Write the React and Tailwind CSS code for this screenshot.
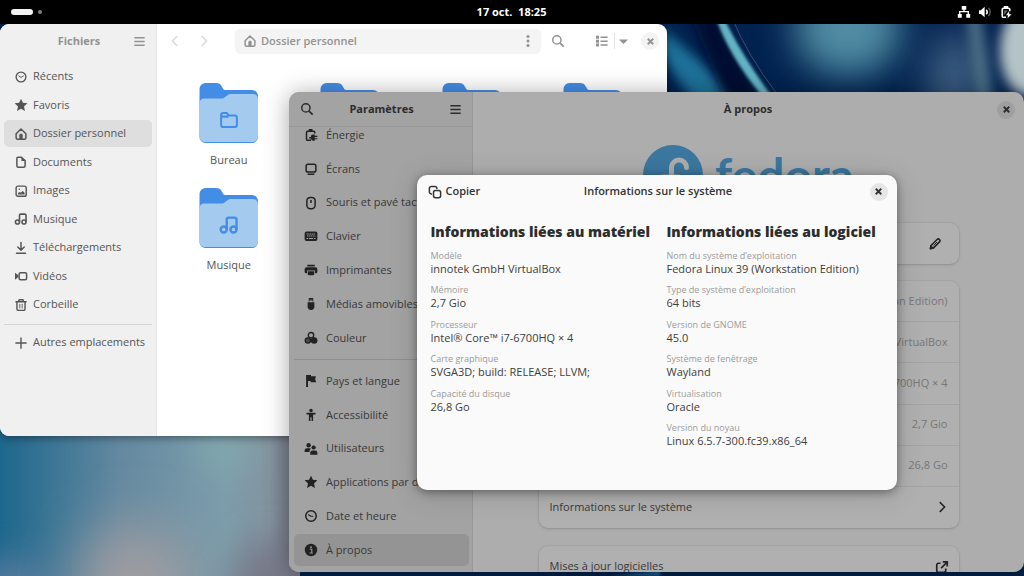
const icons = {
  recent: (
    <g fill="none" stroke="currentColor">
      <circle cx="8" cy="8" r="6.5" strokeWidth="1.8" />
      <path d="M4.6 6.2 8 8.6l3.6-2.2" strokeWidth="1.3" />
    </g>
  ),
  clock: (
    <g fill="none" stroke="currentColor">
      <circle cx="8" cy="8" r="7" strokeWidth="2" />
      <path d="M4.4 6 7.6 8.4H11" strokeWidth="1.5" />
    </g>
  ),
  star: <path d="M8-.4 10.5 5.100l6 .7-4.500 4.100 1.300 6L8 12.900 2.700 15.900l1.300-6L-.5 5.800l6-.7z" fill="currentColor" />,
  home: (
    <g>
      <path
        d="M1.500 7.600 8 1.300l6.500 6.300v5.400a2 2 0 0 1-2 2h-9a2 2 0 0 1-2-2z"
        fill="none"
        stroke="currentColor"
        strokeWidth="2"
        strokeLinejoin="round"
      />
      <path d="M5.800 15V9.500C5.800 8.500 6.800 7.800 8 7.800s2.200.7 2.200 1.700V15z" fill="currentColor" />
    </g>
  ),
  document: (
    <g>
      <path
        d="M4 1.500h4.500L13.500 6v7a2 2 0 0 1-2 2h-7a2 2 0 0 1-2-2V3A1.500 1.500 0 0 1 4 1.500z"
        fill="none"
        stroke="currentColor"
        strokeWidth="2"
      />
      <path d="M8.500 2v4.500h5z" fill="currentColor" />
    </g>
  ),
  image: (
    <g>
      <rect x="1.500" y="1.500" width="13.500" height="13.500" rx="2.500" fill="none" stroke="currentColor" strokeWidth="1.900" />
      <path d="M4 12.800v-2l2-1.600 1.500 1.100L10.200 8l2.600 2.300v2.500z" fill="currentColor" />
      <circle cx="5.800" cy="5.800" r="1" fill="currentColor" />
    </g>
  ),
  music: (
    <g fill="none" stroke="currentColor" strokeWidth="2.100">
      <circle cx="3.300" cy="12" r="2.700" />
      <circle cx="12" cy="12" r="2.700" />
      <path d="M6 12V9.500M6 12V3a1.500 1.500 0 0 1 1.500-1.500h5.700A1.500 1.500 0 0 1 14.700 3v9" />
    </g>
  ),
  download: (
    <g fill="none" stroke="currentColor" strokeWidth="2" strokeLinecap="round">
      <path d="M8 .5v10M3.700 6.600 8 10.900l4.300-4.300M2 15h12" />
    </g>
  ),
  video: (
    <g>
      <rect x="5.500" y="3.500" width="10" height="9.500" rx="2" fill="none" stroke="currentColor" strokeWidth="2" />
      <path d="M0 3.500 4.500 7v2.400L0 12.900z" fill="currentColor" />
    </g>
  ),
  trash: (
    <g fill="none" stroke="currentColor" strokeWidth="1.900">
      <path d="M.5 3.600h15M5 3.500V2A1 1 0 0 1 6 1h4a1 1 0 0 1 1 1v1.500M2.600 4v9.200a2 2 0 0 0 2 2h6.800a2 2 0 0 0 2-2V4" />
      <path d="M6.400 6.500v6M9.600 6.500v6" strokeWidth="1.200" />
    </g>
  ),
  plus: <path d="M8 .5v15M.5 8h15" stroke="currentColor" strokeWidth="1.900" />,
  menu: <path d="M.5 2.500h15M.5 8h15M.5 13.500h15" stroke="currentColor" strokeWidth="2" />,
  search: (
    <g fill="none" stroke="currentColor" strokeWidth="2">
      <circle cx="6.500" cy="6.500" r="5.500" />
      <path d="m10.400 10.400 5.200 5.200" strokeWidth="2.300" />
    </g>
  ),
  back: <path d="M11 1.500 4.500 8l6.500 6.500" fill="none" stroke="currentColor" strokeWidth="2" />,
  next: <path d="M5 1.500 11.500 8 5 14.500" fill="none" stroke="currentColor" strokeWidth="2" />,
  more: (
    <g fill="currentColor">
      <circle cx="8" cy="2" r="2" />
      <circle cx="8" cy="8" r="2" />
      <circle cx="8" cy="14" r="2" />
    </g>
  ),
  list: <path d="M0 1h4v4H0zM0 6.200h4v4H0zM0 11.400h4v4H0zM6 2h9.500v2H6zM6 7.200h9.500v2H6zM6 12.400h9.500v2H6z" fill="currentColor" />,
  caret: <path d="M1.500 5h13L8 11.800z" fill="currentColor" />,
  close: <path d="m4 4 8 8M12 4l-8 8" stroke="currentColor" strokeWidth="2.600" />,
  copy: (
    <g fill="none" stroke="currentColor" strokeWidth="2">
      <path d="M4 10.500H3a2.500 2.500 0 0 1-2.500-2.500V3A2.500 2.500 0 0 1 3 .5h5A2.500 2.500 0 0 1 10.500 3v1" />
      <rect x="6" y="6" width="9.500" height="9.500" rx="2.500" />
    </g>
  ),
  power: (
    <g>
      <path d="M13 6V4.500A1.500 1.500 0 0 0 11.500 3h-8A1.500 1.500 0 0 0 2 4.500v9A1.500 1.500 0 0 0 3.500 15H8" fill="none" stroke="currentColor" strokeWidth="2" />
      <path d="M5 0h5v3H5zM5.500 10.500H8A3 3 0 0 1 11 7.300h2V9h3.500v1.500H13v1.800h3.500v1.500H13V15.500h-2A3 3 0 0 1 8 12.500H5.500z" fill="currentColor" />
    </g>
  ),
  display: (
    <g>
      <rect x="1.500" y="1.500" width="13" height="10.500" rx="2.500" fill="none" stroke="currentColor" strokeWidth="2" />
      <path d="M3.500 14h9v2h-9z" fill="currentColor" />
    </g>
  ),
  mouse: (
    <g fill="none" stroke="currentColor" strokeWidth="2">
      <rect x="2.500" y=".5" width="11" height="15" rx="4.500" />
      <path d="M8 4v4" />
    </g>
  ),
  keyboard: (
    <g>
      <rect x="-.5" y="2" width="17" height="12.500" rx="2.500" fill="currentColor" />
      <path d="M2 5.200h12M2.800 8.100h11" stroke="#a3a3a3" strokeWidth="1.400" strokeDasharray="1.700 .7" />
      <path d="M2 11.200h2M5 11.200h6M12 11.200h2" stroke="#a3a3a3" strokeWidth="1.400" />
    </g>
  ),
  printer: (
    <g fill="currentColor">
      <path d="M3 1h10v2.300H3z" />
      <path d="M2.200 4.300h11.600A2.700 2.700 0 0 1 16.500 7v3.200a2 2 0 0 1-2 2h-1.200V8.800H2.700v3.400H1.500a2 2 0 0 1-2-2V7a2.700 2.700 0 0 1 2.700-2.700z" />
      <path d="M3.700 9.800h8.600v3.400a1.700 1.700 0 0 1-1.700 1.700H5.400a1.700 1.700 0 0 1-1.700-1.700z" />
    </g>
  ),
  usb: (
    <g fill="currentColor">
      <path d="M5 0h6v4.500H9.800V2H8.800v1.500H7.200V2h-1v2.500H5z" />
      <path d="M3.500 5.500h9v6A4.200 4.200 0 0 1 8 16a4.200 4.200 0 0 1-4.500-4.500z" />
    </g>
  ),
  color: (
    <g stroke="currentColor" strokeWidth="1.800">
      <circle cx="8" cy="4.300" r="3.600" fill="none" />
      <circle cx="3.800" cy="11.300" r="3.500" fill="currentColor" fillOpacity=".7" />
      <circle cx="12.200" cy="11.300" r="3.500" fill="currentColor" />
    </g>
  ),
  flag: <path d="M1.500 0H8v1.800h6.500l-1 3.800 1.500 4.200H7.500V8h-3.500v8H1.500z" fill="currentColor" />,
  access: (
    <g fill="currentColor">
      <circle cx="8" cy="2" r="2.300" />
      <path d="M2 5h12v2.200h-3.200V16H8.800v-5H7.200v5h-2V7.200H2z" />
    </g>
  ),
  users: (
    <g fill="currentColor">
      <circle cx="4.800" cy="3" r="2.900" />
      <circle cx="11.500" cy="6" r="2.800" />
      <path d="M-.5 12v-2.200A3 3 0 0 1 2.500 7h4c.7 0 1.300.3 1.700.8C6.400 8.800 6 10 6 12zM7 15.500V13a3 3 0 0 1 3-3h3.500a3 3 0 0 1 3 3v2.500z" />
    </g>
  ),
  info: (
    <g>
      <circle cx="8" cy="8" r="8.300" fill="currentColor" />
      <circle cx="8" cy="4.200" r="1.300" fill="#949494" />
      <path d="M6.300 7H9v5M6 12h4.400" fill="none" stroke="#949494" strokeWidth="1.600" />
    </g>
  ),
  edit: (
    <g>
      <path d="M1.800 14.200 2.800 10l8-8a2.200 2.200 0 0 1 3.200 3.200l-8 8z" fill="none" stroke="currentColor" strokeWidth="2.200" strokeLinejoin="round" />
      <path d="M1.500 14.500 2.500 10 6 13.500zM6 10l4.500-4.500" fill="currentColor" stroke="currentColor" strokeWidth="1.200" />
    </g>
  ),
  external: (
    <g fill="none" stroke="currentColor" strokeWidth="2.200">
      <path d="M6 3H3.200a2.200 2.200 0 0 0-2.200 2.200v7.600A2.200 2.200 0 0 0 3.200 15h7.600a2.200 2.200 0 0 0 2.200-2.200V10" />
      <path d="M9 1.200h6v6M14.800 1.400 6.800 9.400" />
    </g>
  ),
  network: (
    <g fill="currentColor">
      <path d="M5 0h6v5H5zM-.3 10.500h5.300v5H-.3zM11 10.500h5.300v5H11z" />
      <path d="M8 4v4M2.300 11V7.500h11.400V11" fill="none" stroke="currentColor" strokeWidth="1.800" />
    </g>
  ),
  volume: (
    <g>
      <path d="M0 5.500h2.500L7.500 1v14l-5-4.500H0z" fill="currentColor" />
      <path d="M9.600 5c1.600 1.700 1.600 4.300 0 6" fill="none" stroke="currentColor" strokeWidth="2" />
      <path d="M12.500 2.500c3 3.200 3 7.800 0 11" fill="none" stroke="currentColor" strokeOpacity=".4" strokeWidth="1.800" />
    </g>
  ),
  battery: (
    <g>
      <path d="M13 7V4.500A1.500 1.500 0 0 0 11.500 3h-7A1.500 1.500 0 0 0 3 4.500v9A1.500 1.500 0 0 0 4.500 15H8" fill="none" stroke="currentColor" strokeWidth="2.200" />
      <path d="M5 0h6v3H5zM12 7l-4 5.300h2.800L9.800 16.500l5.600-5.600h-3z" fill="currentColor" />
      <path d="M5.500 6h5L5.500 12z" fill="currentColor" fillOpacity=".4" />
    </g>
  ),
  folder: (
    <path
      d="M1 12.500v-9A1.700 1.700 0 0 1 2.700 1.800H6L7.600 4h5.700A1.700 1.700 0 0 1 15 5.700v6.800a1.700 1.700 0 0 1-1.700 1.700H2.700A1.700 1.700 0 0 1 1 12.500zM1.500 5h6"
      fill="none"
      stroke="currentColor"
      strokeWidth="1.800"
    />
  ),
};

function Icon({ name, className = 'size-3' }) {
  return (
    <svg viewBox="0 0 16 16" className={`shrink-0 overflow-visible ${className}`} aria-hidden="true">
      {icons[name]}
    </svg>
  );
}

const places = [
  { icon: 'recent', label: 'Récents' },
  { icon: 'star', label: 'Favoris' },
  { icon: 'home', label: 'Dossier personnel', active: true },
  { icon: 'document', label: 'Documents' },
  { icon: 'image', label: 'Images' },
  { icon: 'music', label: 'Musique' },
  { icon: 'download', label: 'Téléchargements' },
  { icon: 'video', label: 'Vidéos' },
  { icon: 'trash', label: 'Corbeille' },
];

const folders = [
  { icon: 'folder', label: 'Bureau' },
  {},
  {},
  {},
  { icon: 'music', label: 'Musique' },
];

const devicePanels = [
  { icon: 'power', label: 'Énergie' },
  { icon: 'display', label: 'Écrans' },
  { icon: 'mouse', label: 'Souris et pavé tactile' },
  { icon: 'keyboard', label: 'Clavier' },
  { icon: 'printer', label: 'Imprimantes' },
  { icon: 'usb', label: 'Médias amovibles' },
  { icon: 'color', label: 'Couleur' },
];

const systemPanels = [
  { icon: 'flag', label: 'Pays et langue' },
  { icon: 'access', label: 'Accessibilité' },
  { icon: 'users', label: 'Utilisateurs' },
  { icon: 'star', label: 'Applications par défaut' },
  { icon: 'clock', label: 'Date et heure' },
  { icon: 'info', label: 'À propos', active: true },
];

const summary = [
  'Fedora Linux 39 (Workstation Edition)',
  'innotek GmbH VirtualBox',
  'Intel® Core™ i7-6700HQ × 4',
  '2,7 Gio',
  '26,8 Go',
];

const hardware = [
  ['Modèle', 'innotek GmbH VirtualBox'],
  ['Mémoire', '2,7 Gio'],
  ['Processeur', 'Intel® Core™ i7-6700HQ × 4'],
  ['Carte graphique', 'SVGA3D; build: RELEASE; LLVM;'],
  ['Capacité du disque', '26,8 Go'],
];

const software = [
  ['Nom du système d’exploitation', 'Fedora Linux 39 (Workstation Edition)'],
  ['Type de système d’exploitation', '64 bits'],
  ['Version de GNOME', '45.0'],
  ['Système de fenêtrage', 'Wayland'],
  ['Virtualisation', 'Oracle'],
  ['Version du noyau', 'Linux 6.5.7-300.fc39.x86_64'],
];

function Wallpaper() {
  return (
    <svg viewBox="0 0 1024 576" preserveAspectRatio="xMidYMid slice" className="absolute inset-0 size-full" aria-hidden="true">
      <defs>
        <filter id="soft" x="-50%" y="-50%" width="200%" height="200%">
          <feGaussianBlur stdDeviation="18" />
        </filter>
        <filter id="softer" x="-80%" y="-80%" width="260%" height="260%">
          <feGaussianBlur stdDeviation="28" />
        </filter>
        <filter id="edge" x="-50%" y="-50%" width="200%" height="200%">
          <feGaussianBlur stdDeviation="1.5" />
        </filter>
        <filter id="band" x="-50%" y="-50%" width="200%" height="200%">
          <feGaussianBlur stdDeviation="6" />
        </filter>
        <linearGradient id="dusk" x1="0" y1="0" x2="1" y2="0">
          <stop offset="0" stopColor="#1d678d" />
          <stop offset=".4" stopColor="#6489a0" />
          <stop offset=".75" stopColor="#7c9dab" />
          <stop offset=".9" stopColor="#83939f" />
          <stop offset="1" stopColor="#757583" />
        </linearGradient>
      </defs>
      <rect width="1024" height="576" fill="#01224f" />
      <path d="M650 40 664 30 745 100 700 110z" fill="#1c7199" filter="url(#band)" />
      <path d="M688 10h28l50 100h-36z" fill="#010d33" filter="url(#band)" />
      <path d="M716 18h8q16 34 46 76l-8 2q-33-40-46-78z" fill="#62b2c4" filter="url(#edge)" />
      <path d="M733 20q14 34 44 74" fill="none" stroke="#41496a" strokeWidth="1" />
      <ellipse cx="848" cy="28" rx="54" ry="48" fill="#4f8ba3" filter="url(#soft)" />
      <ellipse cx="955" cy="80" rx="30" ry="50" fill="#3b5b80" filter="url(#soft)" />
      <path d="M966 10h14l12 100h-14z" fill="#4e6f86" filter="url(#band)" />
      <ellipse cx="1028" cy="50" rx="28" ry="46" fill="#b4c3c7" filter="url(#band)" />
      <rect y="400" width="300" height="176" fill="url(#dusk)" />
      <ellipse cx="10" cy="600" rx="50" ry="40" fill="#587c9f" filter="url(#soft)" />
      <ellipse cx="135" cy="585" rx="60" ry="60" fill="#a09da1" filter="url(#softer)" />
      <ellipse cx="270" cy="590" rx="40" ry="50" fill="#777888" filter="url(#soft)" />
      <ellipse cx="225" cy="445" rx="26" ry="24" fill="#83a9ae" filter="url(#soft)" />
      <rect x="300" y="560" width="724" height="16" fill="#022149" />
      <path d="M610 576 660 571v5z" fill="#1f5f93" filter="url(#edge)" />
    </svg>
  );
}

function TopBar() {
  return (
    <header className="flex h-6 shrink-0 items-center bg-black pr-3 pl-[11px] text-white">
      <button aria-label="Activités" className="flex flex-1 items-center gap-[5px]">
        <span className="h-1.5 w-[22px] rounded-full bg-[#f2f2f2]" />
        <span className="size-1 rounded-full bg-[#808080]" />
      </button>
      <button className="text-[11px] font-bold whitespace-pre">17 oct.  18:25</button>
      <div className="flex flex-1 items-center justify-end gap-[9px]">
        <Icon name="network" />
        <Icon name="volume" />
        <Icon name="battery" />
      </div>
    </header>
  );
}

function Folder({ icon, label }) {
  return (
    <button className="flex h-[105px] flex-col items-center">
      <span className="grid">
        <svg viewBox="0 0 60 62" className="col-start-1 row-start-1 h-[62px] w-[60px]" aria-hidden="true">
          <path d="M.5 7a6 6 0 0 1 6-6H17c3 0 4.500 1 5.500 3l1.500 2.500C24.500 7.500 25.500 8 27 8h26a6 6 0 0 1 6 6v41a6 6 0 0 1-6 6H6.500a6 6 0 0 1-6-6z" fill="#438de6" />
          <path d="M.5 21a4.500 4.500 0 0 1 4.500-4.500h17c2 0 3-.5 4.500-1.800l2-1.400c1-.9 2-1.300 4-1.300H54a5 5 0 0 1 5 5v37.500a5.500 5.500 0 0 1-5.500 5.500H6a5.500 5.500 0 0 1-5.500-5.500z" fill="#a4caee" />
        </svg>
        <span className="col-start-1 row-start-1 grid place-items-center pt-3.5 text-[#438de6]">
          {icon && <Icon name={icon} className="size-[18px]" />}
        </span>
      </span>
      <span className="mt-2 text-[11px] leading-4">{label}</span>
    </button>
  );
}

function FilesWindow() {
  return (
    <section
      aria-label="Fichiers"
      className="absolute top-0 left-0 flex h-[412px] w-[667px] overflow-hidden rounded-[9px] bg-white text-[#555] shadow-[0_2px_8px_rgba(0,0,0,0.4)]"
    >
      <aside className="flex w-[157px] shrink-0 flex-col border-r border-[#e4e4e4] bg-[#f0f0f0] px-1">
        <div className="flex h-[34px] items-center text-[#929292]">
          <h2 className="flex-1 pl-7 text-center text-[11px] font-bold">Fichiers</h2>
          <button aria-label="Menu" className="grid w-[26px] place-items-center">
            <Icon name="menu" className="size-[11px]" />
          </button>
        </div>
        <nav className="mt-[5px] flex flex-col">
          <ul className="flex h-[255px] flex-col justify-between">
            {places.map(({ icon, label, active }) => (
              <li key={label}>
                <a href="#" className={`flex h-[27px] items-center gap-1.5 rounded-[5px] pl-[11px] text-[11px] ${active ? 'bg-[#dedede]' : ''}`}>
                  <Icon name={icon} />
                  {label}
                </a>
              </li>
            ))}
          </ul>
          <hr className="mt-1.5 border-[#d6d6d6]" />
          <a href="#" className="mt-1 flex h-[27px] items-center gap-1.5 pl-[11px] text-[11px]">
            <Icon name="plus" />
            Autres emplacements
          </a>
        </nav>
      </aside>
      <div className="flex flex-1 flex-col">
        <div className="flex h-[34px] items-center pr-2 pl-3 text-[#929292]">
          <button aria-label="Précédent" className="text-[#dcdcdc]" disabled>
            <Icon name="back" />
          </button>
          <button aria-label="Suivant" className="ml-[17px] text-[#dcdcdc]" disabled>
            <Icon name="next" />
          </button>
          <div className="ml-[25px] flex h-[25px] flex-1 items-center rounded-[5px] bg-[#f4f4f4] pr-[7px] pl-[9px]">
            <Icon name="home" />
            <span className="ml-[5px] flex-1 text-[11px] font-semibold">Dossier personnel</span>
            <button aria-label="Plus d’options">
              <Icon name="more" />
            </button>
          </div>
          <button aria-label="Rechercher" className="ml-[11px]">
            <Icon name="search" />
          </button>
          <button aria-label="Affichage" className="ml-8 border-r border-[#e4e4e4] py-0.5 pr-1.5">
            <Icon name="list" />
          </button>
          <button aria-label="Options d’affichage" className="ml-[3px]">
            <Icon name="caret" className="size-[11px]" />
          </button>
          <button aria-label="Fermer" className="ml-3 grid size-[18px] place-items-center rounded-full bg-[#f3f3f3]">
            <Icon name="close" className="size-[11px]" />
          </button>
        </div>
        <div className="mt-6 grid grid-cols-4 pr-[13px] pl-[11px]">
          {folders.map((folder, index) => (
            <Folder key={index} {...folder} />
          ))}
        </div>
      </div>
    </section>
  );
}

function PanelLink({ icon, label, active }) {
  return (
    <li>
      <a href="#" className={`flex h-8 items-center gap-[9px] rounded-[5px] pl-[11px] text-[11px] whitespace-nowrap ${active ? 'bg-[#949494]' : ''}`}>
        <Icon name={icon} className="size-3 text-[#222]" />
        {label}
      </a>
    </li>
  );
}

function SettingsSidebar() {
  return (
    <aside className="flex w-[184px] shrink-0 flex-col border-r border-[#989898] bg-[#a3a3a3]">
      <div className="flex h-[35px] shrink-0 items-center border-b border-[#999] pr-[11px] pl-3 text-[#2c2c2c]">
        <button aria-label="Rechercher">
          <Icon name="search" />
        </button>
        <h2 className="flex-1 text-center text-[11px] font-bold">Paramètres</h2>
        <button aria-label="Menu">
          <Icon name="menu" className="size-[11px]" />
        </button>
      </div>
      <nav className="flex min-h-0 flex-1 flex-col justify-end overflow-hidden pr-[3px] pb-1.5 pl-[5px]">
        <ul className="flex h-[235px] shrink-0 flex-col justify-between">
          {devicePanels.map((panel) => (
            <PanelLink key={panel.label} {...panel} />
          ))}
        </ul>
        <hr className="my-[5px] border-[#8f8f8f]" />
        <ul className="flex h-[201px] shrink-0 flex-col justify-between">
          {systemPanels.map((panel) => (
            <PanelLink key={panel.label} {...panel} />
          ))}
        </ul>
      </nav>
    </aside>
  );
}

function FedoraLogo() {
  return (
    <div className="flex h-[61px] shrink-0 justify-center gap-3 text-[#3b779f]">
      <svg viewBox="0 0 60 60" className="size-[60px]" aria-hidden="true">
        <path d="M30 0a30 30 0 1 1 0 60H5a5 5 0 0 1-5-5V30A30 30 0 0 1 30 0z" fill="currentColor" />
        <path d="M43.500 22.500a7.500 7.500 0 0 0-15 0v20a8 8 0 1 1-8-10.500h15" fill="none" stroke="#adadad" strokeWidth="5" strokeLinecap="round" />
      </svg>
      <span className="pt-1.5 font-['Lato'] text-5xl leading-none font-bold">fedora</span>
    </div>
  );
}

function AboutPanel() {
  return (
    <div className="flex min-w-0 flex-1 flex-col overflow-hidden">
      <div className="flex h-[35px] shrink-0 items-center pr-[9px] pl-2 text-[#2c2c2c]">
        <h2 className="flex-1 pl-[18px] text-center text-[11px] font-bold">À propos</h2>
        <button aria-label="Fermer" className="grid size-[18px] place-items-center rounded-full bg-[#9f9f9f]">
          <Icon name="close" className="size-[11px]" />
        </button>
      </div>
      <div className="mx-auto flex w-full max-w-[420px] flex-col pt-[18px] text-[11px]">
        <FedoraLogo />
        <div className="mt-[17px] flex h-[41px] shrink-0 items-center justify-end rounded-[9px] bg-[#b0b0b0] pr-[18px] shadow-[0_0_0_1px_rgba(0,0,0,0.03),0_1px_3px_rgba(0,0,0,0.15)]">
          <button aria-label="Modifier">
            <Icon name="edit" className="size-3 text-[#222]" />
          </button>
        </div>
        <ul className="mt-[17px] grid h-[247px] shrink-0 grid-rows-6 divide-y divide-[#a3a3a3] rounded-[9px] bg-[#b0b0b0] shadow-[0_0_0_1px_rgba(0,0,0,0.03),0_1px_3px_rgba(0,0,0,0.15)]">
          {summary.map((value) => (
            <li key={value} className="flex items-center justify-end pr-[11px] text-[#777]">
              {value}
            </li>
          ))}
          <li className="flex">
            <button className="flex flex-1 items-center justify-between pr-[11px] pl-[11px]">
              Informations sur le système
              <Icon name="next" className="size-3 text-[#222]" />
            </button>
          </li>
        </ul>
        <a
          href="#"
          className="mt-[18px] flex h-[41px] shrink-0 items-center justify-between rounded-[9px] bg-[#b0b0b0] pr-[11px] pl-[11px] shadow-[0_0_0_1px_rgba(0,0,0,0.03),0_1px_3px_rgba(0,0,0,0.15)]"
        >
          Mises à jour logicielles
          <Icon name="external" className="size-3 text-[#222]" />
        </a>
      </div>
    </div>
  );
}

function InfoColumn({ title, items }) {
  return (
    <div>
      <h3 className="text-sm leading-5 font-extrabold whitespace-nowrap text-[#2d2d2d]">{title}</h3>
      <dl className="mt-2 grid h-[207px] grid-rows-6">
        {items.map(([label, value]) => (
          <div key={label}>
            <dt className="text-[9px] leading-3 text-[#9a9a9a]">{label}</dt>
            <dd className="text-[11px] leading-[14px]">{value}</dd>
          </div>
        ))}
      </dl>
    </div>
  );
}

function SystemInfoDialog() {
  return (
    <div
      role="dialog"
      aria-label="Informations sur le système"
      className="h-[315px] w-[480px] rounded-[10px] bg-[#fafafa] text-[#404040] shadow-[0_2px_10px_rgba(0,0,0,0.4),0_4px_30px_rgba(0,0,0,0.14)]"
    >
      <div className="grid h-[34px] grid-cols-3 items-center pr-[9px] pl-3 text-[11px] font-semibold text-[#333]">
        <button className="flex items-center gap-[5px]">
          <Icon name="copy" />
          Copier
        </button>
        <h2 className="text-center whitespace-nowrap">Informations sur le système</h2>
        <button aria-label="Fermer" className="grid size-[18px] place-items-center justify-self-end rounded-full bg-[#e6e6e6]">
          <Icon name="close" className="size-[11px]" />
        </button>
      </div>
      <div className="grid grid-cols-2 gap-x-5 px-3.5 pt-[13px]">
        <InfoColumn title="Informations liées au matériel" items={hardware} />
        <InfoColumn title="Informations liées au logiciel" items={software} />
      </div>
    </div>
  );
}

function SettingsWindow() {
  return (
    <section
      aria-label="Paramètres"
      className="absolute top-[68px] right-0 bottom-1 left-[289px] overflow-hidden rounded-[10px] bg-[#adadad] text-[#383838]"
    >
      <div className="flex h-full">
        <SettingsSidebar />
        <AboutPanel />
      </div>
      <div className="absolute inset-0 grid place-items-center">
        <SystemInfoDialog />
      </div>
    </section>
  );
}

export default function App() {
  return (
    <div className="relative flex h-screen flex-col overflow-hidden bg-[#01224f] font-['Open_Sans','Noto_Sans',sans-serif]">
      <Wallpaper />
      <div className="relative flex flex-1 flex-col">
        <TopBar />
        <main className="relative flex-1">
          <FilesWindow />
          <div className="absolute top-[68px] right-0 bottom-1 left-[289px] rounded-[10px] shadow-[0_2px_24px_rgba(0,0,0,0.35)]" />
          <SettingsWindow />
        </main>
      </div>
    </div>
  );
}
